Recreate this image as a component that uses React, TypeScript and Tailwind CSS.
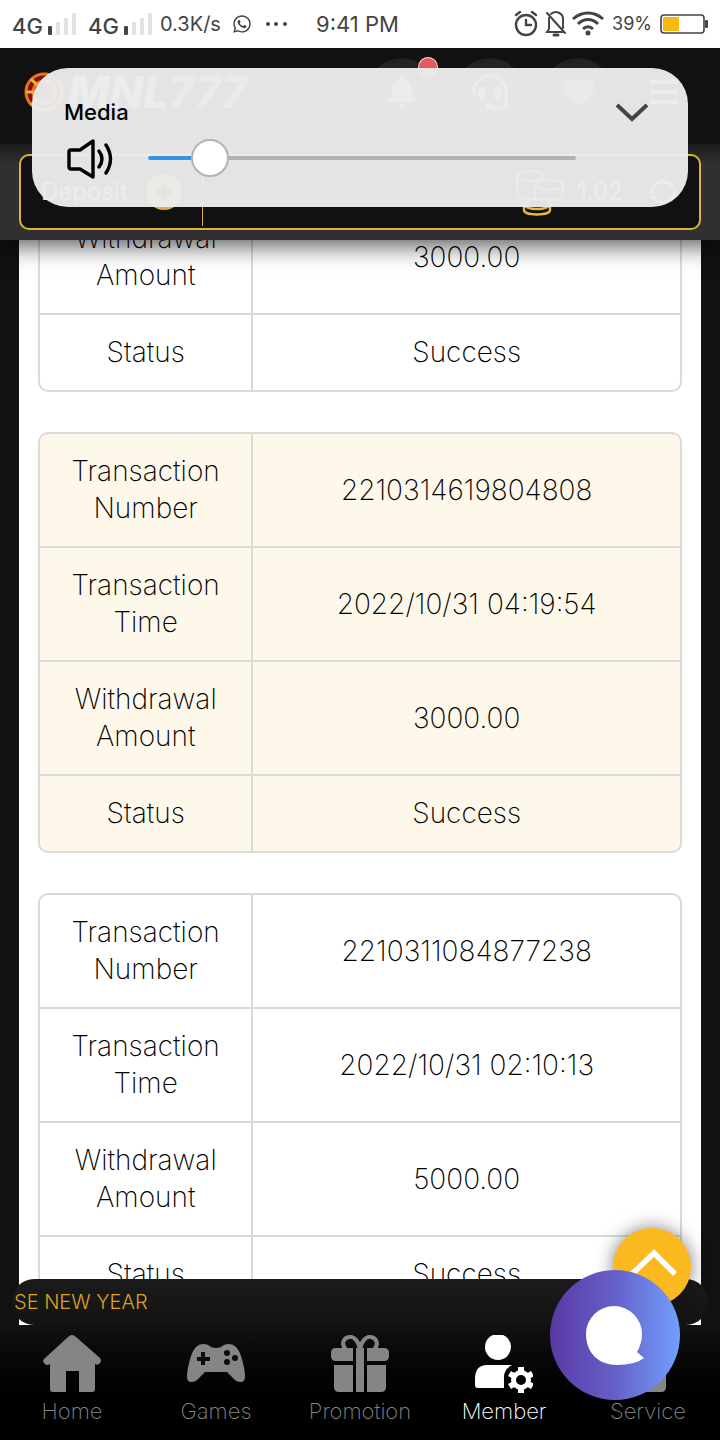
import { useLayoutEffect, useRef, useState, type ReactNode } from 'react'
import { FaWhatsapp, FaHeadset } from 'react-icons/fa'
import { FaBell, FaHeart, FaBars } from 'react-icons/fa6'

interface Transaction {
  id?: string
  time?: string
  amount: string
  status: string
}

const transactions: Transaction[] = [
  { amount: '3000.00', status: 'Success' },
  { id: '2210314619804808', time: '2022/10/31 04:19:54', amount: '3000.00', status: 'Success' },
  { id: '2210311084877238', time: '2022/10/31 02:10:13', amount: '5000.00', status: 'Success' },
]

function SignalBars() {
  return (
    <svg className="w-7 h-6" viewBox="0 0 28 24">
      <rect x="0" y="14" width="4" height="9" rx="1" fill="#444" />
      <rect x="8" y="10" width="4" height="13" rx="1" fill="#e2e2e2" />
      <rect x="16" y="6" width="4" height="17" rx="1" fill="#e2e2e2" />
      <rect x="24" y="1" width="4" height="22" rx="1" fill="#e2e2e2" />
    </svg>
  )
}

function StatusBar() {
  return (
    <div className="relative z-20 h-12 shrink-0 bg-white flex items-center justify-between px-3 text-[#444]">
      <div className="flex items-center">
        <span className="w-9 text-[22px] font-medium pt-1">4G</span>
        <SignalBars />
        <span className="w-9 ml-3 text-[22px] font-medium pt-1">4G</span>
        <SignalBars />
        <span className="w-[72px] ml-2 text-xl">0.3K/s</span>
        <FaWhatsapp className="w-5 h-5" />
        <svg className="w-6 h-6 ml-3" viewBox="0 0 24 24" fill="currentColor">
          <circle cx="4" cy="12" r="2" />
          <circle cx="12" cy="12" r="2" />
          <circle cx="21" cy="12" r="2" />
        </svg>
        <span className="ml-7 text-[22px]">9:41 PM</span>
      </div>
      <div className="flex items-center gap-1">
        <svg className="w-7 h-7" viewBox="0 0 28 28" fill="none" stroke="currentColor" strokeWidth="2.4" strokeLinecap="round">
          <circle cx="14" cy="15" r="10" />
          <path d="M14 10v5h5M4 5l4-3M24 5l-4-3" />
        </svg>
        <svg className="w-6 h-7" viewBox="0 0 24 28" fill="none" stroke="currentColor" strokeWidth="2" strokeLinecap="round">
          <path d="M3 3l18 20M5 8v11l-2 3h16M7 4c5-4 12-1 12 5v9" />
          <path d="M10 25h4" strokeWidth="3" />
        </svg>
        <svg className="w-8 h-7" viewBox="0 0 32 28" fill="none" stroke="currentColor" strokeWidth="3">
          <path d="M1 9c9-8 21-8 30 0M6 14c6-6 14-6 20 0M11 19c3-3 7-3 10 0" />
          <circle cx="16" cy="23" r="2.5" fill="currentColor" stroke="none" />
        </svg>
        <span className="ml-1 text-lg">39%</span>
        <svg className="w-12 h-6 ml-1" viewBox="0 0 48 24">
          <rect x="1" y="3" width="43" height="18" rx="3" fill="none" stroke="#444" strokeWidth="1.6" />
          <rect x="3" y="5" width="16" height="14" fill="#fbb90f" />
          <rect x="45" y="8" width="3" height="8" rx="1" fill="#444" />
        </svg>
      </div>
    </div>
  )
}

function HeaderButton({ label, children }: { label: string; children: ReactNode }) {
  return (
    <button aria-label={label} className="relative w-[68px] h-[68px] rounded-full bg-[#222] flex items-center justify-center text-white">
      {children}
    </button>
  )
}

function SiteHeader() {
  return (
    <header className="shrink-0 relative z-10 shadow-[0_6px_22px_rgba(0,0,0,0.65)]">
      <div className="h-24 bg-[#111] flex items-center justify-between pl-6 pr-10 pb-2">
        <div className="flex items-center gap-1">
          <svg className="w-10 h-10" viewBox="0 0 40 40">
            <circle cx="20" cy="20" r="18" fill="#7d130c" stroke="#e8741c" strokeWidth="3" />
            <circle cx="20" cy="20" r="11" fill="none" stroke="#e8741c" strokeWidth="3" />
            <path d="M2 20h8M7 7l6 6M7 33l6-6" stroke="#f6b02a" strokeWidth="3" />
          </svg>
          <span className="text-[44px] leading-none font-extrabold italic text-white">MNL<span className="text-[#f2b090]">777</span></span>
        </div>
        <div className="flex items-center gap-5">
          <HeaderButton label="Notifications">
            <FaBell className="w-8 h-8" />
            <span className="absolute -top-px -right-0.5 w-5 h-5 rounded-full bg-[#e8585c] border border-white/80" />
          </HeaderButton>
          <HeaderButton label="Support"><FaHeadset className="w-9 h-9" /></HeaderButton>
          <HeaderButton label="Favorites"><FaHeart className="w-8 h-8 text-[#f7b9a8]" /></HeaderButton>
          <button aria-label="Menu" className="ml-4 text-white"><FaBars className="w-8 h-8" /></button>
        </div>
      </div>
      <div className="h-24 px-[19px] py-[10px] bg-linear-to-b from-[#1c1c1c] via-[#303030] via-20% to-[#303030]">
        <div className="h-full rounded-[10px] border-2 border-[#d9b23f] bg-[#111] flex items-center text-[#eee] text-2xl">
          <button className="w-[181px] pl-5 flex items-center justify-between pr-5">
            Deposit
            <svg className="w-9 h-9" viewBox="0 0 36 36">
              <circle cx="18" cy="18" r="18" fill="#e0b23c" />
              <path d="M18 9v18M9 18h18" stroke="#111" strokeWidth="5" />
            </svg>
          </button>
          <span className="w-px h-[68px] bg-[#d9b23f]" />
          <div className="flex-1 flex items-center justify-end gap-3 pr-5">
            <svg className="w-[50px] h-12" viewBox="0 0 50 48" fill="none" stroke="#e5b83f" strokeWidth="2.4">
              <ellipse cx="15" cy="8" rx="13" ry="5" />
              <path d="M2 8v18c0 3 6 5 13 5" />
              <ellipse cx="34" cy="17" rx="14" ry="5" />
              <path d="M20 17v10c0 7 28 7 28 0V17" />
              <ellipse cx="22" cy="36" rx="13" ry="5" />
              <path d="M9 36v6c0 6 26 6 26 0v-6" />
            </svg>
            <span>1.02</span>
            <svg className="w-8 h-8 ml-3" viewBox="0 0 32 32" fill="none" stroke="#fff" strokeWidth="3">
              <path d="M4 18a12 12 0 0 1 20-9l3 3M28 14a12 12 0 0 1-20 9l-3-3" />
            </svg>
          </div>
        </div>
      </div>
    </header>
  )
}

function VolumePanel() {
  const [volume, setVolume] = useState(11)
  return (
    <section className="absolute z-30 top-[68px] inset-x-8 h-[139px] rounded-[36px] bg-[#ebebeb]/97 px-8">
      <div className="flex items-center justify-between pt-6 pr-2">
        <label htmlFor="volume" className="text-[22px] font-medium text-black">Media</label>
        <button aria-label="Collapse">
          <svg className="w-8 h-10" viewBox="0 0 32 40" fill="none" stroke="#444" strokeWidth="4">
            <path d="M1 13l15 14 15-14" />
          </svg>
        </button>
      </div>
      <div className="flex items-center">
        <svg className="w-[52px] h-[52px] shrink-0" viewBox="0 0 52 52" fill="none" stroke="#000" strokeWidth="3.4" strokeLinejoin="round" strokeLinecap="round">
          <path d="M5 20q0-2 2-2h9l13-9v36l-13-8H7q-2 0-2-2zM35 19q6 8 0 16M42 13q9 14 0 28" />
        </svg>
        <input
          id="volume"
          type="range"
          min={0}
          max={100}
          value={volume}
          onChange={(e) => setVolume(Number(e.target.value))}
          style={{ backgroundImage: `linear-gradient(to right, #3793e0 ${volume + 2}%, #b3b3b3 ${volume + 2}%)` }}
          className="ml-8 mr-20 flex-1 min-w-0 h-1 rounded-full appearance-none [&::-webkit-slider-thumb]:appearance-none [&::-webkit-slider-thumb]:w-[38px] [&::-webkit-slider-thumb]:h-[38px] [&::-webkit-slider-thumb]:rounded-full [&::-webkit-slider-thumb]:bg-white [&::-webkit-slider-thumb]:border-2 [&::-webkit-slider-thumb]:border-[#b3b3b3]"
        />
      </div>
    </section>
  )
}

function TransactionCard({ item, tinted }: { item: Transaction; tinted: boolean }) {
  const rows = [
    ['Transaction Number', item.id],
    ['Transaction Time', item.time],
    ['Withdrawal Amount', item.amount],
    ['Status', item.status],
  ].filter(([, value]) => value)
  return (
    <div className={`rounded-[10px] border-2 border-[#dadada] overflow-hidden ${tinted ? 'bg-[#fef8eb]' : 'bg-white'}`}>
      <table className="w-full table-fixed border-separate border-spacing-0 text-center text-[28px] leading-[37px] text-black">
        <tbody>
          {rows.map(([label, value], i) => {
            const line = i < rows.length - 1 ? 'border-b-2' : ''
            return (
              <tr key={label}>
                <th scope="row" className={`w-1/3 px-6 py-[19px] font-extralight border-r-2 border-[#dadada] ${line}`}>{label}</th>
                <td className={`px-4 py-[19px] font-extralight border-[#dadada] ${line}`}>{value}</td>
              </tr>
            )
          })}
        </tbody>
      </table>
    </div>
  )
}

function HomeIcon() {
  return (
    <svg className="w-[58px] h-[58px]" viewBox="0 0 58 58" fill="currentColor">
      <path d="M29 0q2 0 4 2l24 21q2 3 0 5-2 3-5 1v25q0 3-3 3H36V36H23v21H10q-3 0-3-3V29q-3 2-5 0-3-2-1-5L25 2q2-2 4-2z" />
    </svg>
  )
}

function GamesIcon() {
  return (
    <svg className="w-[58px] h-[58px]" viewBox="0 0 58 58">
      <path fill="currentColor" d="M16 9q5 0 8 3 5 2 10 0 3-3 8-3 8 0 12 12 4 13 4 20 0 6-4 6-5 0-8-4l-6-6H18l-6 6q-3 4-8 4-4 0-4-6 0-7 4-20 4-12 12-12z" />
      <path d="M16 17v13M10 24h13" stroke="#0b0b0b" strokeWidth="4" />
      <g fill="#0b0b0b">
        <circle cx="40" cy="18" r="3" />
        <circle cx="48" cy="23" r="3" />
        <circle cx="40" cy="27" r="3" />
      </g>
    </svg>
  )
}

function PromotionIcon() {
  return (
    <svg className="w-[58px] h-[58px]" viewBox="0 0 58 58" fill="currentColor">
      <path d="M5 13h17v13H5q-5 0-5-5v-3q0-5 5-5zM36 13h17q5 0 5 5v3q0 5-5 5H36zM3 30h19v27H8q-5 0-5-5zM36 30h19v22q0 5-5 5H36zM25 13h8v44h-8z" />
      <path d="M29 16C28 6 23 1 18 2c-6 1-8 8-3 12M29 16C30 6 35 1 40 2c6 1 8 8 3 12" fill="none" stroke="currentColor" strokeWidth="4" />
    </svg>
  )
}

function MemberIcon() {
  return (
    <svg className="w-[58px] h-[58px]" viewBox="0 0 58 58" fill="currentColor">
      <circle cx="23" cy="12" r="13" />
      <path d="M12 30h25q-9 5-8 14v9H3q-3 0-3-3v-6q0-14 12-14z" />
      <circle cx="46" cy="45" r="7.5" fill="none" stroke="currentColor" strokeWidth="5" />
      <path d="M46 32v5M46 53v5M34.500 38.500l4.500 2.500M53 49l4.500 2.500M34.500 51.500l4.500-2.500M53 41l4.500-2.500" stroke="currentColor" strokeWidth="6" />
    </svg>
  )
}

function ServiceIcon() {
  return (
    <svg className="w-[58px] h-[58px]" viewBox="0 0 58 58" fill="currentColor">
      <circle cx="29" cy="15" r="13" />
      <path d="M11 34h30q6 0 6 6v12q0 5-5 5H11z" />
    </svg>
  )
}

const tabs = [
  { label: 'Home', icon: <HomeIcon /> },
  { label: 'Games', icon: <GamesIcon /> },
  { label: 'Promotion', icon: <PromotionIcon /> },
  { label: 'Member', icon: <MemberIcon />, active: true },
  { label: 'Service', icon: <ServiceIcon /> },
]

export default function App() {
  const listRef = useRef<HTMLDivElement>(null)

  useLayoutEffect(() => {
    if (listRef.current) listRef.current.scrollTop = 60
  }, [])

  return (
    <div className="relative h-screen flex flex-col overflow-hidden bg-[#111] font-['Inter','Liberation_Sans',sans-serif]">
      <StatusBar />
      <SiteHeader />
      <VolumePanel />

      <main className="relative flex-1 min-h-0">
        <div ref={listRef} className="h-full overflow-y-auto px-[19px] [scrollbar-width:none]">
          <div className="bg-white px-[19px] pt-[19px] pb-16 flex flex-col gap-10">
            {transactions.map((item, i) => (
              <TransactionCard key={i} item={item} tinted={i % 2 === 1} />
            ))}
          </div>
        </div>

        {/* Announcement ticker */}
        <div className="absolute bottom-0 inset-x-3 h-[46px] rounded-[22px] bg-linear-to-b from-[#1b1b1b] to-[#131313] flex items-center overflow-hidden">
          <p className="pl-[2px] text-xl font-light text-[#dda41c]">SE NEW YEAR</p>
        </div>
      </main>

      <nav className="shrink-0 h-[115px] grid grid-cols-5 bg-linear-to-b from-[#121212] to-black">
        {tabs.map((tab) => (
          <a
            key={tab.label}
            href="#"
            className={`flex flex-col items-center pt-[10px] gap-1 ${tab.active ? 'text-white' : 'text-[#858585]'}`}
          >
            {tab.icon}
            <span className="text-[22px] leading-7 font-extralight">{tab.label}</span>
          </a>
        ))}
      </nav>

      {/* Floating buttons */}
      <button aria-label="Back to top" className="absolute right-[29px] bottom-[134px] w-[78px] h-[78px] rounded-full bg-[#fbb920] shadow-[0_0_18px_rgba(0,0,0,0.5)]">
        <svg className="w-full h-full" viewBox="0 0 78 78" fill="none" stroke="#fff" strokeWidth="5.5">
          <path d="M19 46l22-21 21 21" />
        </svg>
      </button>
      <button aria-label="Live chat" className="absolute right-10 bottom-10 w-[130px] h-[130px] rounded-full bg-linear-to-r from-[#5b38a4] via-[#6560c8] to-[#71a0ff]">
        <svg className="w-full h-full" viewBox="0 0 130 130" fill="#fff">
          <path d="M64 36a28 28 0 0 1 28 28q0 9-5 18l7 6q-9 7-27 7c-18 0-31-12-31-31a28 28 0 0 1 28-28z" />
        </svg>
      </button>
    </div>
  )
}
